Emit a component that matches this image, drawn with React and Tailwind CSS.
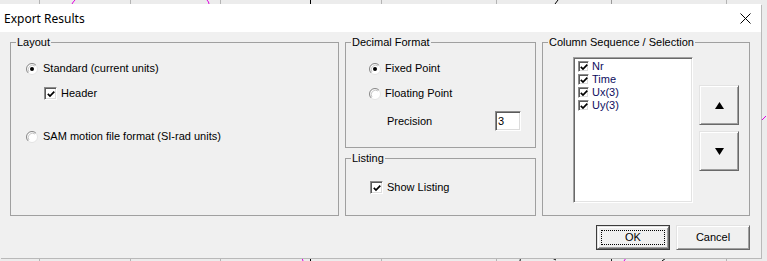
const ui = "font-['Liberation_Sans',Arial,sans-serif] text-[11px] leading-[13px] text-black"

function Backdrop() {
  const ticks = [39, 130, 220, 381, 496, 726]
  return (
    <svg className="absolute inset-0" width="767" height="261">
      {ticks.map(x => (
        <g key={x}>
          <line x1={x + 0.5} y1="0" x2={x + 0.5} y2="4" stroke="#b4b4b4" />
          <line x1={x + 0.5} y1="257" x2={x + 0.5} y2="261" stroke="#b4b4b4" />
        </g>
      ))}
      <line x1="310.5" y1="0" x2="310.5" y2="4" stroke="#000" />
      <line x1="310.5" y1="257" x2="310.5" y2="261" stroke="#000" />
      <line x1="611.5" y1="0" x2="611.5" y2="4" stroke="#999" />
      <line x1="611.5" y1="257" x2="611.5" y2="261" stroke="#222" />
      <path d="M75 0 Q73 2 72 4" stroke="#e000e0" fill="none" />
      <path d="M207 0 Q209 2 209 4" stroke="#e000e0" fill="none" />
      <path d="M558 0 L555 4" stroke="#000" fill="none" />
      <path d="M302 258 L303 261" stroke="#e000e0" fill="none" />
      <path d="M626 258 L624 261" stroke="#e000e0" fill="none" />
      <path d="M519 258 Q521 259 520 261" stroke="#000" fill="none" />
      <path d="M552 258 L556 260" stroke="#000" fill="none" />
      <path d="M666 258 L662 261" stroke="#000" fill="none" />
      <path d="M762 120 L766 116" stroke="#e000e0" fill="none" />
    </svg>
  )
}

function Radio({ checked }) {
  return (
    <svg width="12" height="12" viewBox="0 0 12 12" className="shrink-0">
      <circle cx="6" cy="6" r="5.5" fill="#fff" stroke="#e3e3e3" />
      <path d="M2.1 9.9 A5.5 5.5 0 0 1 9.9 2.1" stroke="#8a8a8a" fill="none" />
      <path d="M3 9 A4.3 4.3 0 0 1 9 3" stroke="#c8c8c8" fill="none" />
      {checked && <circle cx="6" cy="6" r="2" fill="#000" />}
    </svg>
  )
}

function Check({ size = 13 }) {
  const box = size === 13 ? 'w-[13px] h-[13px]' : 'w-[11px] h-[11px]'
  return (
    <div className={`${box} shrink-0 flex items-center justify-center bg-white border border-t-[#8c8c8c] border-l-[#8c8c8c] border-b-white border-r-white shadow-[inset_1px_1px_0_#5a5a5a,inset_-1px_-1px_0_#dcdcdc]`}>
      <svg width="8" height="8" viewBox="0 0 8 8">
        <polyline points="0.8,3.8 3,6 7.3,1.6" stroke="#000" strokeWidth="1.7" fill="none" />
      </svg>
    </div>
  )
}

function Group({ label, className, children }) {
  return (
    <div className={`relative border border-[#a0a0a0] ${className}`}>
      <span className="absolute -top-[7px] left-[5px] bg-[#f0f0f0] px-[1px]">{label}</span>
      {children}
    </div>
  )
}

function Button3D({ children, className }) {
  return (
    <div className={`flex items-center justify-center bg-[#f0f0f0] border border-t-[#e3e3e3] border-l-[#e3e3e3] border-b-[#696969] border-r-[#696969] shadow-[inset_1px_1px_0_#fff,inset_-1px_-1px_0_#a0a0a0] ${className}`}>
      {children}
    </div>
  )
}

export default function App() {
  const columns = ['Nr', 'Time', 'Ux(3)', 'Uy(3)']

  return (
    <div className={`relative w-[767px] h-[261px] overflow-hidden bg-[#ececec] ${ui}`}>
      <Backdrop />
      <div className="relative mt-[4px] w-[761px] h-[254px] flex flex-col shadow-[1px_1px_0_#b9b9b9]">
        <div className="h-[28px] bg-white flex items-center justify-between pl-[4px] pr-[10px]">
          <span className="font-['Noto_Sans',sans-serif] text-[12px] leading-[16px] pt-[2px]">Export Results</span>
          <svg width="11" height="11" viewBox="0 0 11 11" className="mt-[1px]">
            <path d="M0.5 0.5 L10.5 10.5 M10.5 0.5 L0.5 10.5" stroke="#000" strokeWidth="1" />
          </svg>
        </div>

        <div className="flex-1 bg-[#f0f0f0] pt-[10px] pl-[10px] pr-[11px] flex flex-col">
          <div className="flex gap-[6px] h-[174px]">
            <Group label="Layout" className="w-[329px] pt-[19px] pl-[15px] flex flex-col">
              <div className="flex items-center gap-[5px] h-[13px]">
                <Radio checked />
                <span>Standard (current units)</span>
              </div>
              <div className="flex items-center gap-[4px] h-[13px] mt-[12px] ml-[18px]">
                <Check />
                <span>Header</span>
              </div>
              <div className="flex items-center gap-[5px] h-[13px] mt-[30px]">
                <Radio />
                <span>SAM motion file format (SI-rad units)</span>
              </div>
            </Group>

            <div className="w-[191px] flex flex-col gap-[10px]">
              <Group label="Decimal Format" className="h-[106px] pt-[19px] pl-[23px] flex flex-col">
                <div className="flex items-center gap-[4px] h-[13px]">
                  <Radio checked />
                  <span>Fixed Point</span>
                </div>
                <div className="flex items-center gap-[4px] h-[13px] mt-[12px]">
                  <Radio />
                  <span>Floating Point</span>
                </div>
                <div className="flex items-center h-[20px] mt-[11px] ml-[18px]">
                  <span className="w-[108px]">Precision</span>
                  <div className="w-[26px] h-[20px] bg-white pl-[2px] flex items-center border border-t-[#8c8c8c] border-l-[#8c8c8c] border-b-white border-r-white shadow-[inset_1px_1px_0_#5a5a5a,inset_-1px_-1px_0_#dcdcdc]">
                    3
                  </div>
                </div>
              </Group>
              <Group label="Listing" className="flex-1 pt-[22px] pl-[24px]">
                <div className="flex items-center gap-[4px] h-[13px]">
                  <Check />
                  <span>Show Listing</span>
                </div>
              </Group>
            </div>

            <Group label="Column Sequence / Selection" className="w-[208px] pt-[14px] pl-[30px] flex gap-[6px]">
              <div className="w-[120px] h-[146px] bg-white pt-[2px] pl-[2px] border border-t-[#a0a0a0] border-l-[#a0a0a0] border-b-white border-r-white shadow-[inset_1px_1px_0_#696969,inset_-1px_-1px_0_#e3e3e3]">
                {columns.map(c => (
                  <div key={c} className="flex items-center gap-[3px] h-[13px] pl-[2px] text-[#0d0d5e]">
                    <Check size={11} />
                    <span>{c}</span>
                  </div>
                ))}
              </div>
              <div className="flex flex-col gap-[6px] mt-[28px]">
                <Button3D className="w-[40px] h-[40px]">
                  <svg width="9" height="7" viewBox="0 0 9 7"><polygon points="4.5,0 9,7 0,7" fill="#000" /></svg>
                </Button3D>
                <Button3D className="w-[40px] h-[40px]">
                  <svg width="9" height="7" viewBox="0 0 9 7"><polygon points="0,0 9,0 4.5,7" fill="#000" /></svg>
                </Button3D>
              </div>
            </Group>
          </div>

          <div className="flex justify-end gap-[6px] mt-[9px]">
            <div className="w-[74px] h-[25px] border border-[#3c3c3c]">
              <Button3D className="w-full h-full">
                <div className="w-[64px] h-[15px] border border-dotted border-black flex items-center justify-center">OK</div>
              </Button3D>
            </div>
            <Button3D className="w-[74px] h-[25px]">Cancel</Button3D>
          </div>
        </div>
      </div>
    </div>
  )
}
